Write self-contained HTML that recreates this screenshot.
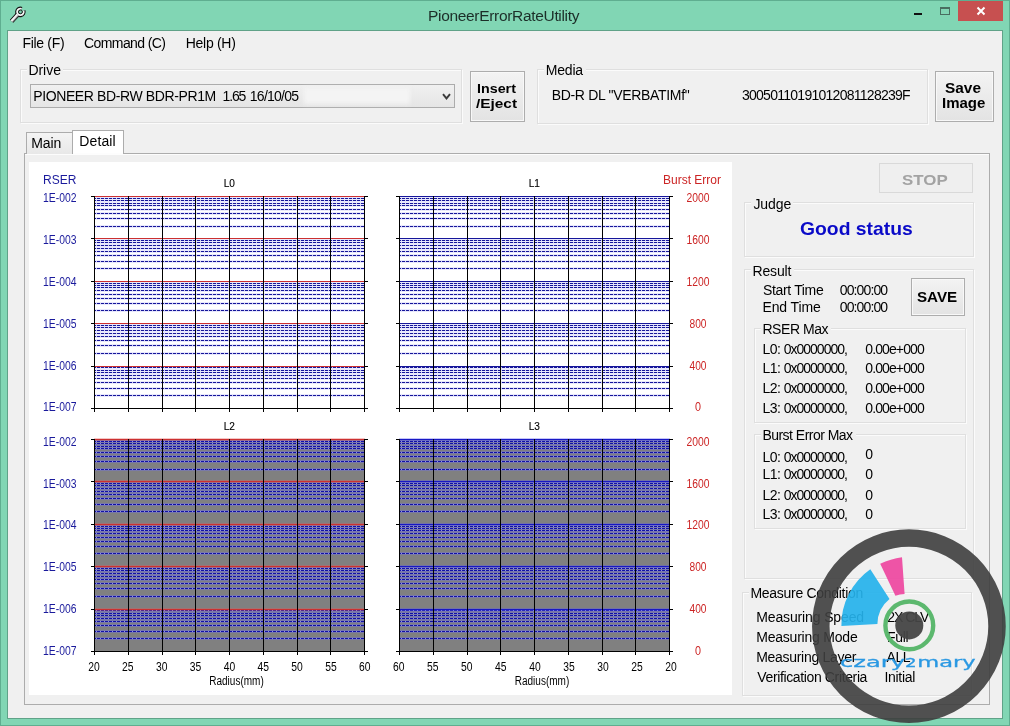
<!DOCTYPE html>
<html><head><meta charset="utf-8"><title>PioneerErrorRateUtility</title>
<style>
html,body{margin:0;padding:0;}
body{width:1010px;height:726px;overflow:hidden;background:#81d6b4;font-family:"Liberation Sans",sans-serif;font-size:13.5px;color:#000;position:relative;}
.abs,.t,.gb,.btn{position:absolute;box-sizing:border-box;}
.t{white-space:nowrap;line-height:1;}
.gb{border:1px solid #dfdfdf;box-shadow:1px 1px 0 #fbfbfb, inset 1px 1px 0 #fbfbfb;}
.cut{position:absolute;background:#f0f0f0;height:3px;}
.btn{border:1px solid #adadad;background:linear-gradient(#f3f3f3,#e3e3e3);box-shadow:inset 0 0 0 1px #f8f8f8;}
svg{position:absolute;left:0;top:0;}
</style></head><body>
<div id="root" style="position:absolute;left:0;top:0;width:1010px;height:726px;will-change:transform;">

<div class="abs" style="left:0;top:0;width:1010px;height:726px;border:1px solid #5fae90;"></div>
<div class="abs" style="left:7px;top:30px;width:996px;height:689px;border:1px solid rgba(70,120,100,0.55);"></div>
<div class="abs" style="left:8px;top:31px;width:994px;height:687px;background:#f0f0f0;"></div>
<div class="abs" style="left:914px;top:13px;width:8px;height:2px;background:#111;"></div>
<div class="abs" style="left:940px;top:7px;width:10px;height:8px;border:1px solid #4a6e60;border-top-width:2px;"></div>
<div class="abs" style="left:958px;top:1px;width:45px;height:20px;background:#c75050;"></div>
<div class="gb" style="left:20px;top:69px;width:442px;height:54px;"></div>
<div class="cut" style="left:27px;top:68px;width:36px;"></div>
<div class="abs" style="left:30px;top:84px;width:425px;height:24px;border:1px solid #acacac;background:linear-gradient(#f0f0f0,#e5e5e5);"></div>
<div class="abs" style="left:304px;top:88px;width:106px;height:16px;background:#f4f4f4;filter:blur(2px);"></div>
<div class="btn" style="left:470px;top:71px;width:55px;height:51px;"></div>
<div class="gb" style="left:537px;top:69px;width:391px;height:55px;"></div>
<div class="cut" style="left:544px;top:68px;width:42px;"></div>
<div class="btn" style="left:935px;top:71px;width:59px;height:51px;"></div>
<div class="abs" style="left:24px;top:153px;width:966px;height:552px;border:1px solid #acacac;background:#f0f0f0;box-shadow:inset 0 1px 0 #fcfcfc;"></div>
<div class="abs" style="left:26px;top:132px;width:47px;height:22px;border:1px solid #acacac;border-bottom:none;background:linear-gradient(#f4f4f4,#e8e8e8);"></div>
<div class="abs" style="left:72px;top:130px;width:52px;height:24px;border:1px solid #acacac;border-bottom:none;background:#fff;"></div>
<div class="abs" style="left:73px;top:153px;width:50px;height:2px;background:#fdfdfd;"></div>
<div class="abs" style="left:29px;top:162px;width:703px;height:533px;background:#fff;"></div>
<svg width="1010" height="726" viewBox="0 0 1010 726" font-family="Liberation Sans, sans-serif" shape-rendering="crispEdges">
<text x="43" y="184" font-size="12" fill="#1a1a9c">RSER</text>
<text x="663" y="184" font-size="12" fill="#cc2424" textLength="58" lengthAdjust="spacingAndGlyphs">Burst Error</text>
<path d="M94 226.5H364M94 218.5H364M94 213.5H364M94 209.5H364M94 205.5H364M94 203.5H364M94 200.5H364M94 198.5H364M94 268.5H364M94 261.5H364M94 255.5H364M94 251.5H364M94 248.5H364M94 245.5H364M94 242.5H364M94 240.5H364M94 310.5H364M94 303.5H364M94 298.5H364M94 294.5H364M94 290.5H364M94 287.5H364M94 285.5H364M94 283.5H364M94 353.5H364M94 345.5H364M94 340.5H364M94 336.5H364M94 333.5H364M94 330.5H364M94 327.5H364M94 325.5H364M94 395.5H364M94 388.5H364M94 382.5H364M94 378.5H364M94 375.5H364M94 372.5H364M94 370.5H364M94 367.5H364" stroke="#b4b4f4" stroke-opacity="0.3" stroke-width="3" fill="none"/>
<path d="M94 226.5H364M94 218.5H364M94 213.5H364M94 209.5H364M94 205.5H364M94 203.5H364M94 200.5H364M94 198.5H364M94 268.5H364M94 261.5H364M94 255.5H364M94 251.5H364M94 248.5H364M94 245.5H364M94 242.5H364M94 240.5H364M94 310.5H364M94 303.5H364M94 298.5H364M94 294.5H364M94 290.5H364M94 287.5H364M94 285.5H364M94 283.5H364M94 353.5H364M94 345.5H364M94 340.5H364M94 336.5H364M94 333.5H364M94 330.5H364M94 327.5H364M94 325.5H364M94 395.5H364M94 388.5H364M94 382.5H364M94 378.5H364M94 375.5H364M94 372.5H364M94 370.5H364M94 367.5H364" stroke="#d0d0f4" stroke-width="1" fill="none"/>
<path d="M94 226.5H364M94 218.5H364M94 213.5H364M94 209.5H364M94 205.5H364M94 203.5H364M94 200.5H364M94 198.5H364M94 268.5H364M94 261.5H364M94 255.5H364M94 251.5H364M94 248.5H364M94 245.5H364M94 242.5H364M94 240.5H364M94 310.5H364M94 303.5H364M94 298.5H364M94 294.5H364M94 290.5H364M94 287.5H364M94 285.5H364M94 283.5H364M94 353.5H364M94 345.5H364M94 340.5H364M94 336.5H364M94 333.5H364M94 330.5H364M94 327.5H364M94 325.5H364M94 395.5H364M94 388.5H364M94 382.5H364M94 378.5H364M94 375.5H364M94 372.5H364M94 370.5H364M94 367.5H364" stroke="#16169a" stroke-width="1" stroke-dasharray="3 1" stroke-dashoffset="1" fill="none"/>
<path d="M94 196.5H365M94 238.5H365M94 281.5H365M94 323.5H365M94 366.5H365" stroke="#cc3030" stroke-width="1" fill="none"/>
<path d="M94.5 196V412M128.5 196V412M162.5 196V412M195.5 196V412M229.5 196V412M263.5 196V412M297.5 196V412M330.5 196V412M364.5 196V412" stroke="#000" stroke-width="1" fill="none"/>
<path d="M91 408.5H368" stroke="#000" stroke-width="1" fill="none"/>
<path d="M91 196.5H94 M365 196.5H368M91 238.5H94 M365 238.5H368M91 281.5H94 M365 281.5H368M91 323.5H94 M365 323.5H368M91 366.5H94 M365 366.5H368" stroke="#000" stroke-width="1" fill="none"/>
<text x="223.7" y="187" font-size="10" fill="#000" stroke="#000" stroke-width="0.12" textLength="11.2" lengthAdjust="spacingAndGlyphs">L0</text>
<text x="43" y="201.8" font-size="12" fill="#1a1a9c" textLength="33.5" lengthAdjust="spacingAndGlyphs">1E-002</text>
<text x="43" y="243.7" font-size="12" fill="#1a1a9c" textLength="33.5" lengthAdjust="spacingAndGlyphs">1E-003</text>
<text x="43" y="285.6" font-size="12" fill="#1a1a9c" textLength="33.5" lengthAdjust="spacingAndGlyphs">1E-004</text>
<text x="43" y="327.6" font-size="12" fill="#1a1a9c" textLength="33.5" lengthAdjust="spacingAndGlyphs">1E-005</text>
<text x="43" y="369.5" font-size="12" fill="#1a1a9c" textLength="33.5" lengthAdjust="spacingAndGlyphs">1E-006</text>
<text x="43" y="411.4" font-size="12" fill="#1a1a9c" textLength="33.5" lengthAdjust="spacingAndGlyphs">1E-007</text>
<path d="M399 226.5H669M399 218.5H669M399 213.5H669M399 209.5H669M399 205.5H669M399 203.5H669M399 200.5H669M399 198.5H669M399 268.5H669M399 261.5H669M399 255.5H669M399 251.5H669M399 248.5H669M399 245.5H669M399 242.5H669M399 240.5H669M399 310.5H669M399 303.5H669M399 298.5H669M399 294.5H669M399 290.5H669M399 287.5H669M399 285.5H669M399 283.5H669M399 353.5H669M399 345.5H669M399 340.5H669M399 336.5H669M399 333.5H669M399 330.5H669M399 327.5H669M399 325.5H669M399 395.5H669M399 388.5H669M399 382.5H669M399 378.5H669M399 375.5H669M399 372.5H669M399 370.5H669M399 367.5H669" stroke="#b4b4f4" stroke-opacity="0.3" stroke-width="3" fill="none"/>
<path d="M399 226.5H669M399 218.5H669M399 213.5H669M399 209.5H669M399 205.5H669M399 203.5H669M399 200.5H669M399 198.5H669M399 268.5H669M399 261.5H669M399 255.5H669M399 251.5H669M399 248.5H669M399 245.5H669M399 242.5H669M399 240.5H669M399 310.5H669M399 303.5H669M399 298.5H669M399 294.5H669M399 290.5H669M399 287.5H669M399 285.5H669M399 283.5H669M399 353.5H669M399 345.5H669M399 340.5H669M399 336.5H669M399 333.5H669M399 330.5H669M399 327.5H669M399 325.5H669M399 395.5H669M399 388.5H669M399 382.5H669M399 378.5H669M399 375.5H669M399 372.5H669M399 370.5H669M399 367.5H669" stroke="#d0d0f4" stroke-width="1" fill="none"/>
<path d="M399 226.5H669M399 218.5H669M399 213.5H669M399 209.5H669M399 205.5H669M399 203.5H669M399 200.5H669M399 198.5H669M399 268.5H669M399 261.5H669M399 255.5H669M399 251.5H669M399 248.5H669M399 245.5H669M399 242.5H669M399 240.5H669M399 310.5H669M399 303.5H669M399 298.5H669M399 294.5H669M399 290.5H669M399 287.5H669M399 285.5H669M399 283.5H669M399 353.5H669M399 345.5H669M399 340.5H669M399 336.5H669M399 333.5H669M399 330.5H669M399 327.5H669M399 325.5H669M399 395.5H669M399 388.5H669M399 382.5H669M399 378.5H669M399 375.5H669M399 372.5H669M399 370.5H669M399 367.5H669" stroke="#16169a" stroke-width="1" stroke-dasharray="3 1" stroke-dashoffset="1" fill="none"/>
<path d="M399 196.5H670M399 238.5H670M399 281.5H670M399 323.5H670M399 366.5H670" stroke="#16169a" stroke-width="1" fill="none"/>
<path d="M399.5 196V412M433.5 196V412M467.5 196V412M500.5 196V412M534.5 196V412M568.5 196V412M602.5 196V412M635.5 196V412M669.5 196V412" stroke="#000" stroke-width="1" fill="none"/>
<path d="M396 408.5H673" stroke="#000" stroke-width="1" fill="none"/>
<path d="M396 196.5H399 M670 196.5H673M396 238.5H399 M670 238.5H673M396 281.5H399 M670 281.5H673M396 323.5H399 M670 323.5H673M396 366.5H399 M670 366.5H673" stroke="#000" stroke-width="1" fill="none"/>
<text x="528.7" y="187" font-size="10" fill="#000" stroke="#000" stroke-width="0.12" textLength="11.2" lengthAdjust="spacingAndGlyphs">L1</text>
<text x="698" y="201.8" font-size="12" fill="#cc2424" text-anchor="middle" textLength="23" lengthAdjust="spacingAndGlyphs">2000</text>
<text x="698" y="243.7" font-size="12" fill="#cc2424" text-anchor="middle" textLength="23" lengthAdjust="spacingAndGlyphs">1600</text>
<text x="698" y="285.6" font-size="12" fill="#cc2424" text-anchor="middle" textLength="23" lengthAdjust="spacingAndGlyphs">1200</text>
<text x="698" y="327.6" font-size="12" fill="#cc2424" text-anchor="middle" textLength="17" lengthAdjust="spacingAndGlyphs">800</text>
<text x="698" y="369.5" font-size="12" fill="#cc2424" text-anchor="middle" textLength="17" lengthAdjust="spacingAndGlyphs">400</text>
<text x="698" y="411.4" font-size="12" fill="#cc2424" text-anchor="middle" textLength="6" lengthAdjust="spacingAndGlyphs">0</text>
<rect x="94" y="439" width="271" height="213" fill="#808080"/>
<path d="M94 469.5H364M94 461.5H364M94 456.5H364M94 452.5H364M94 448.5H364M94 446.5H364M94 443.5H364M94 441.5H364M94 511.5H364M94 504.5H364M94 498.5H364M94 494.5H364M94 491.5H364M94 488.5H364M94 485.5H364M94 483.5H364M94 553.5H364M94 546.5H364M94 541.5H364M94 537.5H364M94 533.5H364M94 530.5H364M94 528.5H364M94 526.5H364M94 596.5H364M94 588.5H364M94 583.5H364M94 579.5H364M94 576.5H364M94 573.5H364M94 570.5H364M94 568.5H364M94 638.5H364M94 631.5H364M94 625.5H364M94 621.5H364M94 618.5H364M94 615.5H364M94 613.5H364M94 610.5H364" stroke="#6c6cf0" stroke-opacity="0.36" stroke-width="3" fill="none"/>
<path d="M94 469.5H364M94 461.5H364M94 456.5H364M94 452.5H364M94 448.5H364M94 446.5H364M94 443.5H364M94 441.5H364M94 511.5H364M94 504.5H364M94 498.5H364M94 494.5H364M94 491.5H364M94 488.5H364M94 485.5H364M94 483.5H364M94 553.5H364M94 546.5H364M94 541.5H364M94 537.5H364M94 533.5H364M94 530.5H364M94 528.5H364M94 526.5H364M94 596.5H364M94 588.5H364M94 583.5H364M94 579.5H364M94 576.5H364M94 573.5H364M94 570.5H364M94 568.5H364M94 638.5H364M94 631.5H364M94 625.5H364M94 621.5H364M94 618.5H364M94 615.5H364M94 613.5H364M94 610.5H364" stroke="#8a8af2" stroke-width="1" fill="none"/>
<path d="M94 469.5H364M94 461.5H364M94 456.5H364M94 452.5H364M94 448.5H364M94 446.5H364M94 443.5H364M94 441.5H364M94 511.5H364M94 504.5H364M94 498.5H364M94 494.5H364M94 491.5H364M94 488.5H364M94 485.5H364M94 483.5H364M94 553.5H364M94 546.5H364M94 541.5H364M94 537.5H364M94 533.5H364M94 530.5H364M94 528.5H364M94 526.5H364M94 596.5H364M94 588.5H364M94 583.5H364M94 579.5H364M94 576.5H364M94 573.5H364M94 570.5H364M94 568.5H364M94 638.5H364M94 631.5H364M94 625.5H364M94 621.5H364M94 618.5H364M94 615.5H364M94 613.5H364M94 610.5H364" stroke="#1212a4" stroke-width="1" stroke-dasharray="3 1" stroke-dashoffset="1" fill="none"/>
<path d="M94 439.5H365M94 481.5H365M94 524.5H365M94 566.5H365M94 609.5H365" stroke="#e05858" stroke-opacity="0.35" stroke-width="3" fill="none"/>
<path d="M94 439.5H365M94 481.5H365M94 524.5H365M94 566.5H365M94 609.5H365" stroke="#cc3030" stroke-width="1" fill="none"/>
<path d="M94.5 439V655M128.5 439V655M162.5 439V655M195.5 439V655M229.5 439V655M263.5 439V655M297.5 439V655M330.5 439V655M364.5 439V655" stroke="#000" stroke-width="1" fill="none"/>
<path d="M91 651.5H368" stroke="#000" stroke-width="1" fill="none"/>
<path d="M91 439.5H94 M365 439.5H368M91 481.5H94 M365 481.5H368M91 524.5H94 M365 524.5H368M91 566.5H94 M365 566.5H368M91 609.5H94 M365 609.5H368" stroke="#000" stroke-width="1" fill="none"/>
<text x="223.7" y="430" font-size="10" fill="#000" stroke="#000" stroke-width="0.12" textLength="11.2" lengthAdjust="spacingAndGlyphs">L2</text>
<text x="43" y="445.6" font-size="12" fill="#1a1a9c" textLength="33.5" lengthAdjust="spacingAndGlyphs">1E-002</text>
<text x="43" y="487.5" font-size="12" fill="#1a1a9c" textLength="33.5" lengthAdjust="spacingAndGlyphs">1E-003</text>
<text x="43" y="529.4" font-size="12" fill="#1a1a9c" textLength="33.5" lengthAdjust="spacingAndGlyphs">1E-004</text>
<text x="43" y="571.4" font-size="12" fill="#1a1a9c" textLength="33.5" lengthAdjust="spacingAndGlyphs">1E-005</text>
<text x="43" y="613.3" font-size="12" fill="#1a1a9c" textLength="33.5" lengthAdjust="spacingAndGlyphs">1E-006</text>
<text x="43" y="655.2" font-size="12" fill="#1a1a9c" textLength="33.5" lengthAdjust="spacingAndGlyphs">1E-007</text>
<text x="94.0" y="671" font-size="12" fill="#000" text-anchor="middle" textLength="11.5" lengthAdjust="spacingAndGlyphs">20</text>
<text x="127.8" y="671" font-size="12" fill="#000" text-anchor="middle" textLength="11.5" lengthAdjust="spacingAndGlyphs">25</text>
<text x="161.7" y="671" font-size="12" fill="#000" text-anchor="middle" textLength="11.5" lengthAdjust="spacingAndGlyphs">30</text>
<text x="195.5" y="671" font-size="12" fill="#000" text-anchor="middle" textLength="11.5" lengthAdjust="spacingAndGlyphs">35</text>
<text x="229.4" y="671" font-size="12" fill="#000" text-anchor="middle" textLength="11.5" lengthAdjust="spacingAndGlyphs">40</text>
<text x="263.2" y="671" font-size="12" fill="#000" text-anchor="middle" textLength="11.5" lengthAdjust="spacingAndGlyphs">45</text>
<text x="297.0" y="671" font-size="12" fill="#000" text-anchor="middle" textLength="11.5" lengthAdjust="spacingAndGlyphs">50</text>
<text x="330.9" y="671" font-size="12" fill="#000" text-anchor="middle" textLength="11.5" lengthAdjust="spacingAndGlyphs">55</text>
<text x="364.7" y="671" font-size="12" fill="#000" text-anchor="middle" textLength="11.5" lengthAdjust="spacingAndGlyphs">60</text>
<text x="236.5" y="685" font-size="12" fill="#000" text-anchor="middle" textLength="54.5" lengthAdjust="spacingAndGlyphs">Radius(mm)</text>
<rect x="399" y="439" width="271" height="213" fill="#808080"/>
<path d="M399 469.5H669M399 461.5H669M399 456.5H669M399 452.5H669M399 448.5H669M399 446.5H669M399 443.5H669M399 441.5H669M399 511.5H669M399 504.5H669M399 498.5H669M399 494.5H669M399 491.5H669M399 488.5H669M399 485.5H669M399 483.5H669M399 553.5H669M399 546.5H669M399 541.5H669M399 537.5H669M399 533.5H669M399 530.5H669M399 528.5H669M399 526.5H669M399 596.5H669M399 588.5H669M399 583.5H669M399 579.5H669M399 576.5H669M399 573.5H669M399 570.5H669M399 568.5H669M399 638.5H669M399 631.5H669M399 625.5H669M399 621.5H669M399 618.5H669M399 615.5H669M399 613.5H669M399 610.5H669" stroke="#6c6cf0" stroke-opacity="0.36" stroke-width="3" fill="none"/>
<path d="M399 469.5H669M399 461.5H669M399 456.5H669M399 452.5H669M399 448.5H669M399 446.5H669M399 443.5H669M399 441.5H669M399 511.5H669M399 504.5H669M399 498.5H669M399 494.5H669M399 491.5H669M399 488.5H669M399 485.5H669M399 483.5H669M399 553.5H669M399 546.5H669M399 541.5H669M399 537.5H669M399 533.5H669M399 530.5H669M399 528.5H669M399 526.5H669M399 596.5H669M399 588.5H669M399 583.5H669M399 579.5H669M399 576.5H669M399 573.5H669M399 570.5H669M399 568.5H669M399 638.5H669M399 631.5H669M399 625.5H669M399 621.5H669M399 618.5H669M399 615.5H669M399 613.5H669M399 610.5H669" stroke="#8a8af2" stroke-width="1" fill="none"/>
<path d="M399 469.5H669M399 461.5H669M399 456.5H669M399 452.5H669M399 448.5H669M399 446.5H669M399 443.5H669M399 441.5H669M399 511.5H669M399 504.5H669M399 498.5H669M399 494.5H669M399 491.5H669M399 488.5H669M399 485.5H669M399 483.5H669M399 553.5H669M399 546.5H669M399 541.5H669M399 537.5H669M399 533.5H669M399 530.5H669M399 528.5H669M399 526.5H669M399 596.5H669M399 588.5H669M399 583.5H669M399 579.5H669M399 576.5H669M399 573.5H669M399 570.5H669M399 568.5H669M399 638.5H669M399 631.5H669M399 625.5H669M399 621.5H669M399 618.5H669M399 615.5H669M399 613.5H669M399 610.5H669" stroke="#1212a4" stroke-width="1" stroke-dasharray="3 1" stroke-dashoffset="1" fill="none"/>
<path d="M399 439.5H670M399 481.5H670M399 524.5H670M399 566.5H670M399 609.5H670" stroke="#5a5af0" stroke-opacity="0.35" stroke-width="3" fill="none"/>
<path d="M399 439.5H670M399 481.5H670M399 524.5H670M399 566.5H670M399 609.5H670" stroke="#1818c4" stroke-width="1" fill="none"/>
<path d="M399.5 439V655M433.5 439V655M467.5 439V655M500.5 439V655M534.5 439V655M568.5 439V655M602.5 439V655M635.5 439V655M669.5 439V655" stroke="#000" stroke-width="1" fill="none"/>
<path d="M396 651.5H673" stroke="#000" stroke-width="1" fill="none"/>
<path d="M396 439.5H399 M670 439.5H673M396 481.5H399 M670 481.5H673M396 524.5H399 M670 524.5H673M396 566.5H399 M670 566.5H673M396 609.5H399 M670 609.5H673" stroke="#000" stroke-width="1" fill="none"/>
<text x="528.7" y="430" font-size="10" fill="#000" stroke="#000" stroke-width="0.12" textLength="11.2" lengthAdjust="spacingAndGlyphs">L3</text>
<text x="698" y="445.6" font-size="12" fill="#cc2424" text-anchor="middle" textLength="23" lengthAdjust="spacingAndGlyphs">2000</text>
<text x="698" y="487.5" font-size="12" fill="#cc2424" text-anchor="middle" textLength="23" lengthAdjust="spacingAndGlyphs">1600</text>
<text x="698" y="529.4" font-size="12" fill="#cc2424" text-anchor="middle" textLength="23" lengthAdjust="spacingAndGlyphs">1200</text>
<text x="698" y="571.4" font-size="12" fill="#cc2424" text-anchor="middle" textLength="17" lengthAdjust="spacingAndGlyphs">800</text>
<text x="698" y="613.3" font-size="12" fill="#cc2424" text-anchor="middle" textLength="17" lengthAdjust="spacingAndGlyphs">400</text>
<text x="698" y="655.2" font-size="12" fill="#cc2424" text-anchor="middle" textLength="6" lengthAdjust="spacingAndGlyphs">0</text>
<text x="398.7" y="671" font-size="12" fill="#000" text-anchor="middle" textLength="11.5" lengthAdjust="spacingAndGlyphs">60</text>
<text x="432.7" y="671" font-size="12" fill="#000" text-anchor="middle" textLength="11.5" lengthAdjust="spacingAndGlyphs">55</text>
<text x="466.8" y="671" font-size="12" fill="#000" text-anchor="middle" textLength="11.5" lengthAdjust="spacingAndGlyphs">50</text>
<text x="500.8" y="671" font-size="12" fill="#000" text-anchor="middle" textLength="11.5" lengthAdjust="spacingAndGlyphs">45</text>
<text x="534.9" y="671" font-size="12" fill="#000" text-anchor="middle" textLength="11.5" lengthAdjust="spacingAndGlyphs">40</text>
<text x="568.9" y="671" font-size="12" fill="#000" text-anchor="middle" textLength="11.5" lengthAdjust="spacingAndGlyphs">35</text>
<text x="602.9" y="671" font-size="12" fill="#000" text-anchor="middle" textLength="11.5" lengthAdjust="spacingAndGlyphs">30</text>
<text x="637.0" y="671" font-size="12" fill="#000" text-anchor="middle" textLength="11.5" lengthAdjust="spacingAndGlyphs">25</text>
<text x="671.0" y="671" font-size="12" fill="#000" text-anchor="middle" textLength="11.5" lengthAdjust="spacingAndGlyphs">20</text>
<text x="542.0" y="685" font-size="12" fill="#000" text-anchor="middle" textLength="54.5" lengthAdjust="spacingAndGlyphs">Radius(mm)</text>
</svg>
<div class="abs" style="left:879px;top:163px;width:94px;height:30px;border:1px solid #d9d9d9;background:#efefef;"></div>
<div class="gb" style="left:744px;top:202px;width:230px;height:55px;"></div>
<div class="cut" style="left:751px;top:201px;width:42px;"></div>
<div class="gb" style="left:744px;top:269px;width:230px;height:310px;"></div>
<div class="cut" style="left:751px;top:268px;width:43px;"></div>
<div class="btn" style="left:911px;top:278px;width:54px;height:38px;"></div>
<div class="gb" style="left:754px;top:328px;width:212px;height:95px;"></div>
<div class="cut" style="left:761px;top:327px;width:70px;"></div>
<div class="gb" style="left:754px;top:434px;width:212px;height:95px;"></div>
<div class="cut" style="left:761px;top:433px;width:95px;"></div>
<div class="gb" style="left:742px;top:592px;width:230px;height:104px;"></div>
<div class="cut" style="left:749px;top:591px;width:116px;"></div>
<div class="t" style="left:22.41px;top:36.15px;font-size:14px;letter-spacing:-0.301px;">File (F)</div>
<div class="t" style="left:84.04px;top:36.15px;font-size:14px;letter-spacing:-0.592px;">Command (C)</div>
<div class="t" style="left:185.81px;top:36.15px;font-size:14px;letter-spacing:-0.300px;">Help (H)</div>
<div class="t" style="left:427.99px;top:7.88px;font-size:15.5px;color:#1c2e28;letter-spacing:-0.318px;">PioneerErrorRateUtility</div>
<div class="t" style="left:28.41px;top:63.15px;font-size:14px;letter-spacing:-0.027px;">Drive</div>
<div class="t" style="left:33.21px;top:88.75px;font-size:14px;letter-spacing:-0.384px;">PIONEER BD-RW BDR-PR1M</div>
<div class="t" style="left:222.62px;top:88.75px;font-size:14px;letter-spacing:-1.169px;">1.65</div>
<div class="t" style="left:249.82px;top:88.75px;font-size:14px;letter-spacing:-0.751px;">16/10/05</div>
<div class="t" style="left:545.71px;top:63.15px;font-size:14px;letter-spacing:-0.181px;">Media</div>
<div class="t" style="left:551.71px;top:88.25px;font-size:14px;letter-spacing:-0.315px;">BD-R DL "VERBATIMf"</div>
<div class="t" style="left:741.96px;top:88.25px;font-size:14px;letter-spacing:-0.733px;">30050110191012081128239F</div>
<div class="t" style="left:31.21px;top:135.65px;font-size:14px;letter-spacing:-0.055px;">Main</div>
<div class="t" style="left:79.31px;top:133.75px;font-size:14px;letter-spacing:0.105px;">Detail</div>
<div class="t" style="left:476.61px;top:81.56px;font-size:13.4px;font-weight:bold;transform:scaleX(1.0678);transform-origin:0 0;">Insert</div>
<div class="t" style="left:476.30px;top:97.36px;font-size:13.4px;font-weight:bold;transform:scaleX(1.1489);transform-origin:0 0;">/Eject</div>
<div class="t" style="left:945.36px;top:80.88px;font-size:14.2px;font-weight:bold;transform:scaleX(1.0863);transform-origin:0 0;">Save</div>
<div class="t" style="left:941.76px;top:96.28px;font-size:14.2px;font-weight:bold;transform:scaleX(1.0578);transform-origin:0 0;">Image</div>
<div class="t" style="left:902.04px;top:171.73px;font-size:15.2px;font-weight:bold;color:#a3a3a3;transform:scaleX(1.1119);transform-origin:0 0;">STOP</div>
<div class="t" style="left:753.38px;top:196.75px;font-size:14px;letter-spacing:-0.065px;">Judge</div>
<div class="t" style="left:800.00px;top:218.92px;font-size:19px;font-weight:bold;color:#0a0ac8;transform:scaleX(1.0176);transform-origin:0 0;">Good status</div>
<div class="t" style="left:752.51px;top:263.65px;font-size:14px;letter-spacing:-0.147px;">Result</div>
<div class="t" style="left:763.06px;top:283.35px;font-size:14px;letter-spacing:-0.349px;">Start Time</div>
<div class="t" style="left:839.76px;top:283.35px;font-size:14px;letter-spacing:-0.873px;">00:00:00</div>
<div class="t" style="left:762.41px;top:300.15px;font-size:14px;letter-spacing:-0.118px;">End Time</div>
<div class="t" style="left:839.76px;top:300.15px;font-size:14px;letter-spacing:-0.873px;">00:00:00</div>
<div class="t" style="left:917.46px;top:289.68px;font-size:14.67px;font-weight:bold;transform:scaleX(1.0355);transform-origin:0 0;">SAVE</div>
<div class="t" style="left:762.41px;top:321.85px;font-size:14px;letter-spacing:-0.434px;">RSER Max</div>
<div class="t" style="left:762.41px;top:427.65px;font-size:14px;letter-spacing:-0.523px;">Burst Error Max</div>
<div class="t" style="left:750.51px;top:586.15px;font-size:14px;letter-spacing:-0.296px;">Measure Condition</div>
<div class="t" style="left:756.21px;top:610.15px;font-size:14px;letter-spacing:-0.133px;">Measuring Speed</div>
<div class="t" style="left:756.21px;top:629.95px;font-size:14px;letter-spacing:-0.216px;">Measuring Mode</div>
<div class="t" style="left:756.21px;top:649.85px;font-size:14px;letter-spacing:-0.294px;">Measuring Layer</div>
<div class="t" style="left:757.30px;top:670.15px;font-size:14px;letter-spacing:-0.369px;">Verification Criteria</div>
<div class="t" style="left:887.34px;top:610.15px;font-size:14px;letter-spacing:-1.044px;">2X CLV</div>
<div class="t" style="left:886.91px;top:629.95px;font-size:14px;letter-spacing:-0.247px;">Full</div>
<div class="t" style="left:886.50px;top:649.85px;font-size:14px;letter-spacing:-0.381px;">ALL</div>
<div class="t" style="left:884.41px;top:670.15px;font-size:14px;letter-spacing:-0.278px;">Initial</div>
<div class="t" style="left:762.41px;top:341.55px;font-size:14px;letter-spacing:-0.502px;">L0:</div>
<div class="t" style="left:783.66px;top:341.55px;font-size:14px;letter-spacing:-0.988px;">0x0000000,</div>
<div class="t" style="left:865.26px;top:341.55px;font-size:14px;letter-spacing:-0.885px;">0.00e+000</div>
<div class="t" style="left:762.41px;top:361.45px;font-size:14px;letter-spacing:-0.502px;">L1:</div>
<div class="t" style="left:783.66px;top:361.45px;font-size:14px;letter-spacing:-0.988px;">0x0000000,</div>
<div class="t" style="left:865.26px;top:361.45px;font-size:14px;letter-spacing:-0.885px;">0.00e+000</div>
<div class="t" style="left:762.41px;top:381.35px;font-size:14px;letter-spacing:-0.502px;">L2:</div>
<div class="t" style="left:783.66px;top:381.35px;font-size:14px;letter-spacing:-0.988px;">0x0000000,</div>
<div class="t" style="left:865.26px;top:381.35px;font-size:14px;letter-spacing:-0.885px;">0.00e+000</div>
<div class="t" style="left:762.41px;top:401.35px;font-size:14px;letter-spacing:-0.502px;">L3:</div>
<div class="t" style="left:783.66px;top:401.35px;font-size:14px;letter-spacing:-0.988px;">0x0000000,</div>
<div class="t" style="left:865.26px;top:401.35px;font-size:14px;letter-spacing:-0.885px;">0.00e+000</div>
<div class="t" style="left:762.41px;top:450.35px;font-size:14px;letter-spacing:-0.502px;">L0:</div>
<div class="t" style="left:783.66px;top:450.35px;font-size:14px;letter-spacing:-0.988px;">0x0000000,</div>
<div class="t" style="left:865.26px;top:447.15px;font-size:14px;">0</div>
<div class="t" style="left:762.41px;top:466.75px;font-size:14px;letter-spacing:-0.502px;">L1:</div>
<div class="t" style="left:783.66px;top:466.75px;font-size:14px;letter-spacing:-0.988px;">0x0000000,</div>
<div class="t" style="left:865.26px;top:466.75px;font-size:14px;">0</div>
<div class="t" style="left:762.41px;top:487.65px;font-size:14px;letter-spacing:-0.502px;">L2:</div>
<div class="t" style="left:783.66px;top:487.65px;font-size:14px;letter-spacing:-0.988px;">0x0000000,</div>
<div class="t" style="left:865.26px;top:487.65px;font-size:14px;">0</div>
<div class="t" style="left:762.41px;top:507.25px;font-size:14px;letter-spacing:-0.502px;">L3:</div>
<div class="t" style="left:783.66px;top:507.25px;font-size:14px;letter-spacing:-0.988px;">0x0000000,</div>
<div class="t" style="left:865.26px;top:507.25px;font-size:14px;">0</div>
<svg width="1010" height="726" viewBox="0 0 1010 726">
<path d="M977.5 7.5 L984.5 14.5 M984.5 7.5 L977.5 14.5" stroke="#fff" stroke-width="2" fill="none"/>
<path d="M443 94.2 L446.5 98.4 L450 94.2" stroke="#3a3a3a" stroke-width="1.9" fill="none"/>
<path d="M17.6 14.6 L11.6 21.2" stroke="#111" stroke-width="4.6" fill="none"/>
<path d="M23.37 10.70 A3.20 3.20 0 1 1 21.60 8.93" stroke="#111" stroke-width="4.2" fill="none" stroke-linecap="butt"/>
<path d="M17.9 14.9 L11.9 21.5" stroke="#8a8a8a" stroke-width="2.4" fill="none"/>
<path d="M17.3 14.4 L11.3 21.0" stroke="#f4f4f4" stroke-width="2.0" fill="none"/>
<path d="M23.37 10.70 A3.20 3.20 0 1 1 21.60 8.93" stroke="#f6f6f6" stroke-width="2.0" fill="none" stroke-linecap="butt"/>
<circle cx="20.4" cy="11.9" r="1.9" fill="#81d6b4" stroke="#111" stroke-width="0.9"/>
</svg>
<svg width="1010" height="726" viewBox="0 0 1010 726" font-family="DejaVu Sans, sans-serif">
<circle cx="908.9" cy="626.2" r="88.1" fill="none" stroke="#3e3e3e" stroke-opacity="0.9" stroke-width="17.5"/>
<path d="M841.4 626.0 A68.1 68.1 0 0 1 870.3 569.3 L889.5 599.0 A32.5 32.5 0 0 0 877.4 624.0 Z" fill="#25b2ec" fill-opacity="0.92"/>
<path d="M880.2 563.8 A68.3 68.3 0 0 1 902.0 557.2 L904.6 594.1 A32 32 0 0 0 895.4 595.7 Z" fill="#ee46a0" fill-opacity="0.92"/>
<circle cx="909.3" cy="625.4" r="23.9" fill="none" stroke="#5cb86e" stroke-width="4.4"/>
<circle cx="909.3" cy="625.4" r="14" fill="#444" fill-opacity="0.95"/>
<text x="840.0" y="667.2" font-size="14.8" fill="#2a98e2" stroke="#2a98e2" stroke-width="0.3" textLength="65.0" lengthAdjust="spacingAndGlyphs">czary</text>
<text x="905.0" y="667.2" font-size="11.4" fill="#2a98e2" stroke="#2a98e2" stroke-width="0.3" textLength="11.6" lengthAdjust="spacingAndGlyphs">2</text>
<text x="917.3" y="667.2" font-size="14.8" fill="#2a98e2" stroke="#2a98e2" stroke-width="0.3" textLength="58.4" lengthAdjust="spacingAndGlyphs">mary</text>
</svg>
</div></body></html>
